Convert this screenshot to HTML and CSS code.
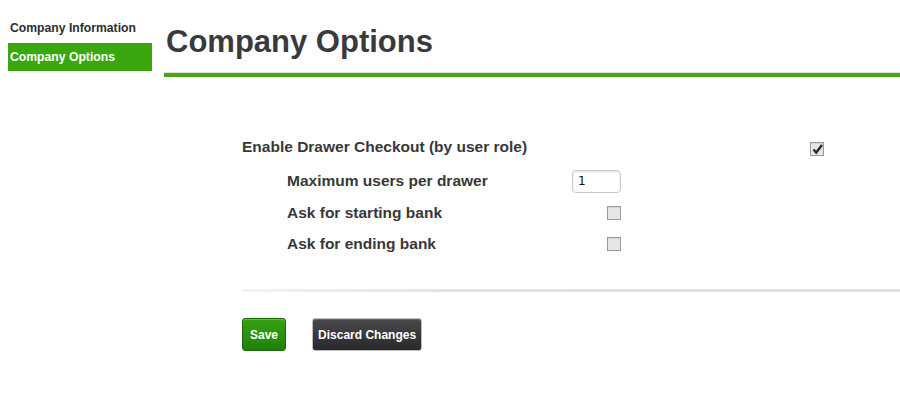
FILE: index.html
```html
<!DOCTYPE html>
<html lang="en">
<head>
  <meta charset="UTF-8">
  <title>Company Options</title>
  <link rel="stylesheet" href="styles.css">
</head>
<body>
  <div class="page">
    <nav class="sidebar">
      <a class="nav-item">Company Information</a>
      <a class="nav-item active">Company Options</a>
    </nav>

    <div class="main">
      <h1 class="title">Company Options</h1>
      <div class="title-rule"></div>

      <form class="options">
        <div class="row">
          <label>Enable Drawer Checkout (by user role)</label>
          <span class="check checked">
            <svg viewBox="0 0 13 13" width="13" height="13"><path d="M2.5 6.5 L5.2 9.6 L11 2" fill="none" stroke="#2b2b2b" stroke-width="2.4"/></svg>
          </span>
        </div>

        <div class="sub">
          <div class="row tall">
            <label>Maximum users per drawer</label>
            <input class="num" type="text" value="1">
          </div>
          <div class="row">
            <label>Ask for starting bank</label>
            <span class="check"></span>
          </div>
          <div class="row">
            <label>Ask for ending bank</label>
            <span class="check"></span>
          </div>
        </div>

        <div class="divider"></div>

        <div class="actions">
          <button type="button" class="btn btn-save">Save</button>
          <button type="button" class="btn btn-discard">Discard Changes</button>
        </div>
      </form>
    </div>
  </div>
</body>
</html>
```

FILE: styles.css
```css
body { margin: 0; background: #fff; font-family: "Liberation Sans", Arial, sans-serif; color: #363636; }
.page { display: flex; }

.sidebar { width: 144px; padding: 14px 0 0 8px; display: flex; flex-direction: column; gap: 1px; }
.nav-item {
  display: block; height: 28px; line-height: 28px; padding-left: 2px;
  font-size: 12.2px; font-weight: bold; color: #2e2e2e;
}
.nav-item.active { background: #3ba70f; color: #fff; }

.main { flex: 1; padding-left: 12px; }
.title { margin: 24px 0 0 0; font-size: 31px; line-height: 36px; font-weight: bold; color: #3a3a3c; padding-left: 2px; }
.title-rule { margin-top: 12px; height: 4px; border-top: 1px solid #dbe6d5; background: #44a717; }

.options { padding: 55px 0 0 78px; }
.row { display: flex; justify-content: space-between; align-items: center; height: 30px; width: 582px; }
.row label { font-size: 15.5px; font-weight: bold; color: #383838; }

.sub { margin: 3px 0 0 45px; }
.sub .row { width: 334px; height: 31px; }
.sub .row.tall { height: 32px; }

.check {
  display: block; width: 12px; height: 12px;
  border: 1px solid #9a9a9a; background: #e6e6e6;
  box-shadow: inset 0 1px 1px rgba(0,0,0,0.08);
}
.check svg { display: block; }
.check.checked { margin-top: 4px; }

.num {
  box-sizing: border-box; width: 49px; height: 23px; padding: 0 5px;
  border: 1px solid #c9c9c9; border-radius: 4px;
  box-shadow: inset 0 1px 2px rgba(0,0,0,0.12);
  font-family: "DejaVu Sans", sans-serif; font-size: 12px; color: #111;
}

.divider {
  margin-top: 30px; height: 3px;
  background: linear-gradient(to right, #f3f3f3, #e2e2e2 35%, #e0e0e0);
}

.actions { display: flex; gap: 26px; margin-top: 26px; }
.btn {
  height: 33px; padding: 0 5px; border-radius: 3px; cursor: pointer;
  font-family: "Liberation Sans", Arial, sans-serif; font-size: 12px; font-weight: bold; color: #fff;
}
.btn-save {
  padding: 0 7px;
  background: linear-gradient(#36a212, #1f800a);
  border: 1px solid #1b6a08;
  box-shadow: inset 0 1px 0 rgba(255,255,255,0.25);
}
.btn-discard {
  background: linear-gradient(#4a4a4c, #29292b);
  border: 1px solid #bdbdbd;
  box-shadow: inset 0 1px 0 rgba(255,255,255,0.15);
}
```
